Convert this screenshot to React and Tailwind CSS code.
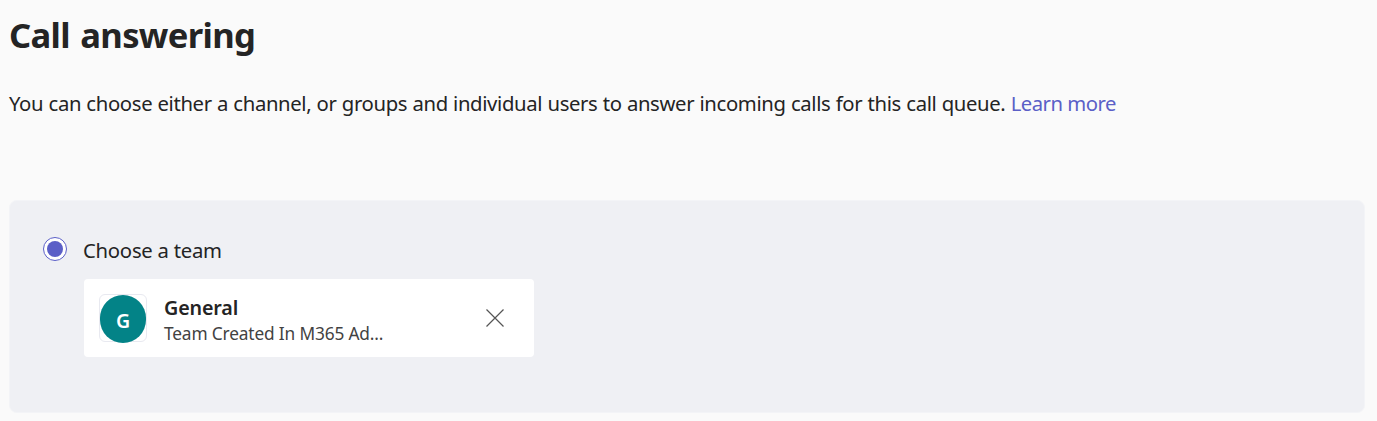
export default function App() {
  return (
    <main className="flex h-[421px] w-[1377px] flex-col overflow-hidden bg-[#fafafa] pl-[9px] pr-3 font-['Noto_Sans',sans-serif] text-[#242424]">
      <h1 className="mt-[10px] h-[50px] self-start whitespace-nowrap text-[34.6px] font-bold leading-[50px] tracking-[-0.65px] [word-spacing:2px]">Call answering</h1>
      <p className="mt-[28px] h-[30px] self-start whitespace-nowrap text-[20.3px] leading-[30px]">
        <span className="tracking-[-0.35px] [word-spacing:0.35px]">You can choose either a channel, or groups and individual users to answer incoming calls for this call queue. </span>
        <a className="tracking-[-0.52px] text-[#5b5fc7]">Learn more</a>
      </p>
      <section className="mt-[82px] flex h-[213px] flex-col rounded-lg border border-[#f3f4f7] bg-[#eff0f4] pl-[33px] pt-[34px]">
        <label className="flex h-[30px] items-center">
          <span className="mb-[3px] flex size-6 items-center justify-center rounded-full border border-[#5b5fc7] bg-white">
            <span className="size-4 rounded-full bg-[#5b5fc7]" />
          </span>
          <span className="ml-4 whitespace-nowrap text-[20.3px] leading-[30px] tracking-[-0.25px]">Choose a team</span>
        </label>
        <div className="ml-[41px] mt-[14px] flex h-[78px] w-[450px] items-center rounded bg-white pl-[15px] pr-[30.5px]">
          <span className="flex size-12 items-center justify-center rounded-md border border-[#e8e9f0]">
            <span className="mt-px flex h-12 w-[46px] shrink-0 items-center justify-center rounded-full bg-[#038387] pt-1 text-[19.5px] font-semibold leading-none text-white">G</span>
          </span>
          <div className="ml-[17px] mt-[3px] flex flex-col">
            <span className="self-start whitespace-nowrap text-[19.7px] font-semibold leading-[27px] tracking-[-0.15px]">General</span>
            <span className="self-start whitespace-nowrap text-[17.3px] leading-[25px] tracking-[-0.15px] text-[#424242]">Team Created In M365 Ad...</span>
          </div>
          <svg className="ml-auto size-[18px]" viewBox="0 0 18 18" fill="none" stroke="#555" strokeWidth="1.2">
            <path d="M0.5 0.5 17.5 17.5M17.5 0.5 0.5 17.5" />
          </svg>
        </div>
      </section>
    </main>
  );
}
